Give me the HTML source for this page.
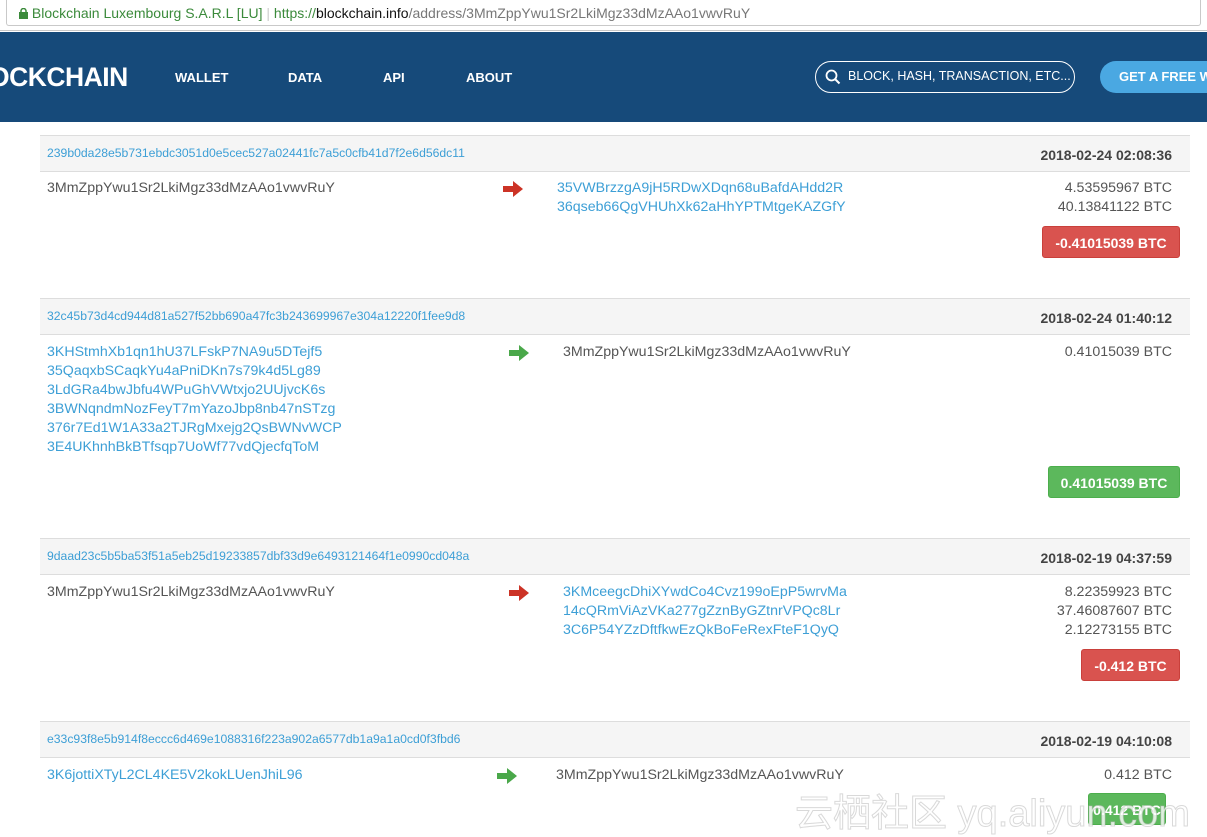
<!DOCTYPE html>
<html><head><meta charset="utf-8"><style>
*{margin:0;padding:0;box-sizing:border-box}
body{width:1207px;height:835px;overflow:hidden;background:#fff;font-family:"Liberation Sans",Arial,sans-serif;position:relative}
.a{position:absolute;white-space:nowrap}
.bar{left:0;top:0;width:1207px;height:31px;background:#fff;border-bottom:1px solid #c8c8c8}
.url{left:6px;top:0;width:1195px;height:26px;border:1px solid #c9c9c9;border-top:none;border-radius:0 0 3px 3px;font-size:14px;line-height:26px;padding-left:12px}
.nav{left:0;top:32px;width:1207px;height:90px;background:#164a7a}
.nl{color:#fff;font-weight:bold;font-size:13px;top:70px}
.hd{left:40px;width:1150px;height:37px;background:#f5f5f5;border-top:1px solid #ddd;border-bottom:1px solid #ddd}
.hash{color:#3d9fd6;font-size:12.2px;left:47px}
.dt{color:#444;font-weight:bold;font-size:14px;right:35px}
.t{font-size:14.2px;color:#555;line-height:19px}
.l{font-size:14.2px;color:#3d9fd6;line-height:19px}
.r{text-align:right;right:35px}
.btn{color:#fff;font-size:14px;font-weight:bold;height:32px;line-height:32px;border-radius:3px;text-align:center}
.red{background:#d9534f;border:1px solid #c9403b}
.grn{background:#5cb85c;border:1px solid #4cae4c}
</style></head><body>
<div class="a bar"></div>
<div class="a url"><svg width="9" height="11" style="vertical-align:-1px"><rect x="0" y="4" width="9" height="7" fill="#3b8a3b"/><path d="M2 5V3a2.5 2.5 0 015 0v2" stroke="#3b8a3b" stroke-width="1.5" fill="none"/></svg> <span style="color:#3b8a3b">Blockchain Luxembourg S.A.R.L [LU]</span> <span style="color:#ccc">|</span> <span style="color:#3b8a3b">https://</span><span style="color:#111">blockchain.info</span><span style="color:#777">/address/3MmZppYwu1Sr2LkiMgz33dMzAAo1vwvRuY</span></div>
<div class="a nav"></div>
<div class="a" style="left:-11px;top:62px;color:#fff;font-weight:bold;font-size:26.5px;letter-spacing:-0.5px">OCKCHAIN</div>
<div class="a nl" style="left:175px">WALLET</div>
<div class="a nl" style="left:288px">DATA</div>
<div class="a nl" style="left:383px">API</div>
<div class="a nl" style="left:466px">ABOUT</div>
<div class="a" style="left:815px;top:61px;width:260px;height:32px;border:1.5px solid #fff;border-radius:16px;color:#fff;font-size:12.5px;line-height:29px;padding-left:32px">BLOCK, HASH, TRANSACTION, ETC...</div>
<svg class="a" style="left:825px;top:69px" width="16" height="16"><circle cx="6.5" cy="6.5" r="5" stroke="#fff" stroke-width="1.8" fill="none"/><path d="M10 10l4.5 4.5" stroke="#fff" stroke-width="2"/></svg>
<div class="a" style="left:1100px;top:61px;width:140px;height:32px;border-radius:16px;background:#4aa8e2;color:#fff;font-weight:bold;font-size:13px;line-height:32px;padding-left:19px">GET A FREE WALLET</div>

<!-- tx1 -->
<div class="a hd" style="top:135px"></div>
<div class="a hash" style="top:146px">239b0da28e5b731ebdc3051d0e5cec527a02441fc7a5c0cfb41d7f2e6d56dc11</div>
<div class="a dt" style="top:147px">2018-02-24 02:08:36</div>
<div class="a t" style="left:47px;top:179px">3MmZppYwu1Sr2LkiMgz33dMzAAo1vwvRuY</div>
<svg class="a" style="left:503px;top:181px" width="20" height="16"><path d="M0 5h10V0l10 8-10 8v-5H0z" fill="#cc3326"/></svg>
<div class="a l" style="left:557px;top:179px">35VWBrzzgA9jH5RDwXDqn68uBafdAHdd2R<br>36qseb66QgVHUhXk62aHhYPTMtgeKAZGfY</div>
<div class="a t r" style="top:179px">4.53595967 BTC<br>40.13841122 BTC</div>
<div class="a btn red" style="left:1042px;top:226px;width:138px">-0.41015039 BTC</div>

<!-- tx2 -->
<div class="a hd" style="top:298px"></div>
<div class="a hash" style="top:309px">32c45b73d4cd944d81a527f52bb690a47fc3b243699967e304a12220f1fee9d8</div>
<div class="a dt" style="top:310px">2018-02-24 01:40:12</div>
<div class="a l" style="left:47px;top:343px">3KHStmhXb1qn1hU37LFskP7NA9u5DTejf5<br>35QaqxbSCaqkYu4aPniDKn7s79k4d5Lg89<br>3LdGRa4bwJbfu4WPuGhVWtxjo2UUjvcK6s<br>3BWNqndmNozFeyT7mYazoJbp8nb47nSTzg<br>376r7Ed1W1A33a2TJRgMxejg2QsBWNvWCP<br>3E4UKhnhBkBTfsqp7UoWf77vdQjecfqToM</div>
<svg class="a" style="left:509px;top:345px" width="20" height="16"><path d="M0 5h10V0l10 8-10 8v-5H0z" fill="#4aa84a"/></svg>
<div class="a t" style="left:563px;top:343px">3MmZppYwu1Sr2LkiMgz33dMzAAo1vwvRuY</div>
<div class="a t r" style="top:343px">0.41015039 BTC</div>
<div class="a btn grn" style="left:1048px;top:466px;width:132px">0.41015039 BTC</div>

<!-- tx3 -->
<div class="a hd" style="top:538px"></div>
<div class="a hash" style="top:549px">9daad23c5b5ba53f51a5eb25d19233857dbf33d9e6493121464f1e0990cd048a</div>
<div class="a dt" style="top:550px">2018-02-19 04:37:59</div>
<div class="a t" style="left:47px;top:583px">3MmZppYwu1Sr2LkiMgz33dMzAAo1vwvRuY</div>
<svg class="a" style="left:509px;top:585px" width="20" height="16"><path d="M0 5h10V0l10 8-10 8v-5H0z" fill="#cc3326"/></svg>
<div class="a l" style="left:563px;top:583px">3KMceegcDhiXYwdCo4Cvz199oEpP5wrvMa<br>14cQRmViAzVKa277gZznByGZtnrVPQc8Lr<br>3C6P54YZzDftfkwEzQkBoFeRexFteF1QyQ</div>
<div class="a t r" style="top:583px">8.22359923 BTC<br>37.46087607 BTC<br>2.12273155 BTC</div>
<div class="a btn red" style="left:1081px;top:649px;width:99px">-0.412 BTC</div>

<!-- tx4 -->
<div class="a hd" style="top:721px"></div>
<div class="a hash" style="top:732px">e33c93f8e5b914f8eccc6d469e1088316f223a902a6577db1a9a1a0cd0f3fbd6</div>
<div class="a dt" style="top:733px">2018-02-19 04:10:08</div>
<div class="a l" style="left:47px;top:766px">3K6jottiXTyL2CL4KE5V2kokLUenJhiL96</div>
<svg class="a" style="left:497px;top:768px" width="20" height="16"><path d="M0 5h10V0l10 8-10 8v-5H0z" fill="#4aa84a"/></svg>
<div class="a t" style="left:556px;top:766px">3MmZppYwu1Sr2LkiMgz33dMzAAo1vwvRuY</div>
<div class="a t r" style="top:766px">0.412 BTC</div>
<div class="a btn grn" style="left:1088px;top:793px;width:78px">0.412 BTC</div>
<div class="a" style="left:795px;top:782px;font-size:38px;color:rgba(255,255,255,0.8);-webkit-text-stroke:1px rgba(180,180,180,0.5);font-family:'Liberation Sans','Noto Sans CJK SC',sans-serif">云栖社区 yq.aliyun.com</div>
</body></html>
